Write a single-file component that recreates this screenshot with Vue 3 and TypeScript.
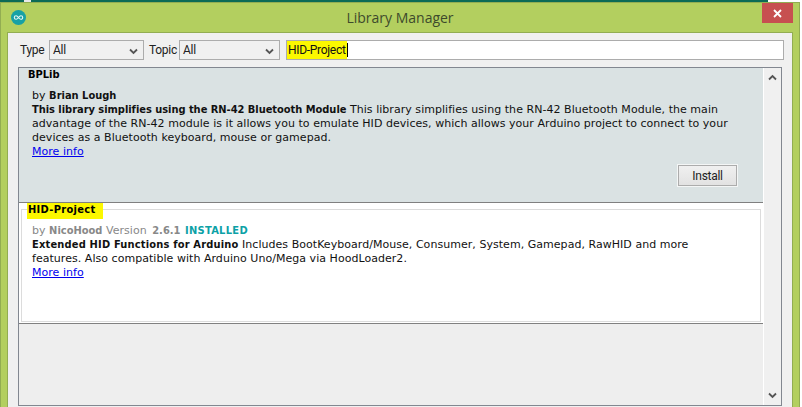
<script setup lang="ts">
const selects = [
  { label: 'Type', value: 'All', width: 95 },
  { label: 'Topic', value: 'All', width: 101 },
]
</script>

<template>
  <div class="page">
    <div class="topstrip"></div>
    <div class="window">
      <div class="titlebar">
        <svg class="logo" width="15" height="15" viewBox="0 0 15 15">
          <circle cx="7.5" cy="7.5" r="7.500" fill="#17a1a5" />
          <path d="M7.500 7.500c-1-1.300-1.500-1.800-2.400-1.800a1.800 1.800 0 0 0 0 3.600c.9 0 1.400-.5 2.400-1.800c1-1.300 1.500-1.800 2.400-1.800a1.800 1.800 0 0 1 0 3.600c-.9 0-1.400-.5-2.400-1.800z" fill="none" stroke="#e8f6f6" stroke-width="1.100" />
        </svg>
        <span class="title">Library Manager</span>
        <button class="close" type="button">
          <svg width="9" height="9" viewBox="0 0 9 9"><path d="M1 1l7 7M8 1l-7 7" stroke="#fff" stroke-width="1.800" fill="none" /></svg>
        </button>
      </div>
      <div class="client">
        <div class="filters">
          <template v-for="s in selects" :key="s.label">
            <span class="flabel">{{ s.label }}</span>
            <div class="select" :style="{ width: s.width + 'px' }">
              <span>{{ s.value }}</span>
              <svg class="chev" width="9" height="7" viewBox="0 0 9 7"><path d="M1 1.500l3.500 3.500L8 1.500" fill="none" stroke="#555" stroke-width="1.800" /></svg>
            </div>
          </template>
          <div class="search"><span class="mark">HID-Project</span><i class="caret"></i></div>
        </div>
        <div class="listbox">
          <div class="list">
            <section class="item selected">
              <h3 class="name">BPLib</h3>
              <p class="by">by <b>Brian Lough</b></p>
              <p class="desc"><b class="lead-a">This library simplifies using the RN-42 Bluetooth Module</b> This library simplifies using the RN-42 Bluetooth Module, the main advantage of the RN-42 module is it allows you to emulate HID devices, which allows your Arduino project to connect to your devices as a Bluetooth keyboard, mouse or gamepad.</p>
              <a class="more">More info</a>
              <div class="actions"><button class="install" type="button">Install</button></div>
            </section>
            <section class="item second">
              <div class="fieldset">
                <h3 class="legend"><span class="mark">HID-Project</span></h3>
                <p class="by muted">by <b>NicoHood</b> Version <b class="ver">2.6.1</b> <b class="installed">INSTALLED</b></p>
                <p class="desc"><b class="lead-b">Extended HID Functions for Arduino</b> Includes BootKeyboard/Mouse, Consumer, System, Gamepad, RawHID and more features. Also compatible with Arduino Uno/Mega via HoodLoader2.</p>
                <a class="more">More info</a>
              </div>
            </section>
            <div class="rest"></div>
          </div>
          <div class="scrollbar">
            <svg width="9" height="7" viewBox="0 0 9 7"><path d="M1 5.500L4.500 2 8 5.500" fill="none" stroke="#555" stroke-width="1.800" /></svg>
            <svg width="9" height="7" viewBox="0 0 9 7"><path d="M1 1.500L4.500 5 8 1.500" fill="none" stroke="#555" stroke-width="1.800" /></svg>
          </div>
        </div>
      </div>
    </div>
  </div>
</template>

<style>
html, body { margin: 0; background: #fff; overflow: hidden; }
</style>

<style scoped>
.page { width: 802px; height: 407px; overflow: hidden; background: #fff; }
.topstrip { height: 2px; margin-right: 34px; background: linear-gradient(90deg, #0c6a56 24px, #e8e8e8 24px, #e8e8e8 31px, #0c6a56 31px); }
.window { height: 405px; width: 800px; box-sizing: border-box; background: #b3cf5f; border: 1px solid #92ad52; border-bottom: 0; padding: 0 6px; display: flex; flex-direction: column; }
.titlebar { height: 29px; flex: none; display: flex; align-items: center; justify-content: center; position: relative; }
.logo { position: absolute; left: 4px; top: 7px; }
.title { font: 14px "Open Sans", sans-serif; color: #3d4a2c; }
.close { position: absolute; right: 0; top: 0; width: 31px; height: 20px; padding: 0; border: 0; background: #c75050; display: flex; align-items: center; justify-content: center; }
.client { flex: 1; background: #f0f0f0; border: 1px solid #92ad52; border-bottom: 0; padding: 7px 8px 0 10px; display: flex; flex-direction: column; min-height: 0; }
.filters { display: flex; align-items: center; height: 20px; flex: none; font: 12px Roboto, sans-serif; letter-spacing: -0.3px; }
.flabel { color: #222; margin: 0 6px 0 2px; width: 23px; }
.select + .flabel { margin-left: 5px; width: 24px; margin-right: 6px; }
.select { height: 20px; box-sizing: border-box; background: #f0f0f0; border: 1px solid #acacac; display: flex; align-items: center; justify-content: space-between; padding: 0 5px 0 3px; color: #222; }
.chev { margin-top: 3px; }
.search { flex: 1; height: 20px; box-sizing: border-box; background: #fff; border: 1px solid #acacac; margin-left: 6px; display: flex; align-items: stretch; color: #111; }
.search .mark { display: flex; align-items: center; padding: 0 1px 0 1px; }
.mark { background: #fcf800; }
.caret { width: 1px; height: 14px; margin-top: 2px; background: #000; }
.listbox { flex: 1; margin: 7px 2px 1px 0; display: flex; border: 1px solid #828790; min-height: 0; background: #f0f0f0; }
.list { flex: 1; display: flex; flex-direction: column; min-width: 0; font: 11px/14px "DejaVu Sans", sans-serif; color: #111; letter-spacing: 0.04px; }
.list b, .name, .legend { font-family: "DejaVu Sans Condensed", "DejaVu Sans", sans-serif; font-weight: bold; letter-spacing: 0; }
.item { box-sizing: border-box; }
.selected { height: 135px; flex: none; background: #dae2e3; padding: 0 30px 0 9px; border-bottom: 1px solid #808080; position: relative; }
.name, .legend { margin: 0; font-size: 11px; line-height: 14px; color: #000; }
.by, .desc { margin: 0; }
.selected .by { margin-top: 7px; padding-left: 4px; }
.desc { padding-left: 4px; }
.more { display: block; padding-left: 4px; color: #0000ee; text-decoration: underline; }
.list .lead-a { letter-spacing: -0.03px; }
.list .lead-b { letter-spacing: 0.18px; }
.actions { position: absolute; right: 26px; top: 97px; }
.install { display: block; width: 59px; height: 21px; padding: 0; background: linear-gradient(#f0f0f0, #e2e2e2); border: 1px solid #acacac; outline: 1px solid #f4f6f6; font: 12px Roboto, sans-serif; letter-spacing: -0.3px; color: #222; }
.second { height: 121px; flex: none; background: #fff; border-bottom: 1px solid #808080; padding: 6px 2px 1px 2px; }
.fieldset { position: relative; height: 100%; box-sizing: border-box; border: 1px solid #dcdcdc; padding: 14px 25px 0 10px; }
.list .legend { position: absolute; left: 6px; top: -7px; background: #fff; padding-right: 6px; letter-spacing: 0.3px; }
.legend .mark { display: inline-block; padding: 0 8px 2px 1px; margin: 0 -8px -2px -1px; }
.muted { color: #888; }
.list .muted b { color: #888; }
.list .muted .ver { margin-left: 2px; }
.list .muted .installed { color: #0ca1a6; letter-spacing: 0.3px; margin-left: 1px; }
.fieldset .by, .fieldset .desc, .fieldset .more { padding-left: 0; }
.rest { flex: 1; background: #eee; }
.scrollbar { width: 17px; flex: none; background: #f0f0f0; border-left: 1px solid #fff; display: flex; flex-direction: column; justify-content: space-between; align-items: center; padding: 6px 0 6px; }
</style>
